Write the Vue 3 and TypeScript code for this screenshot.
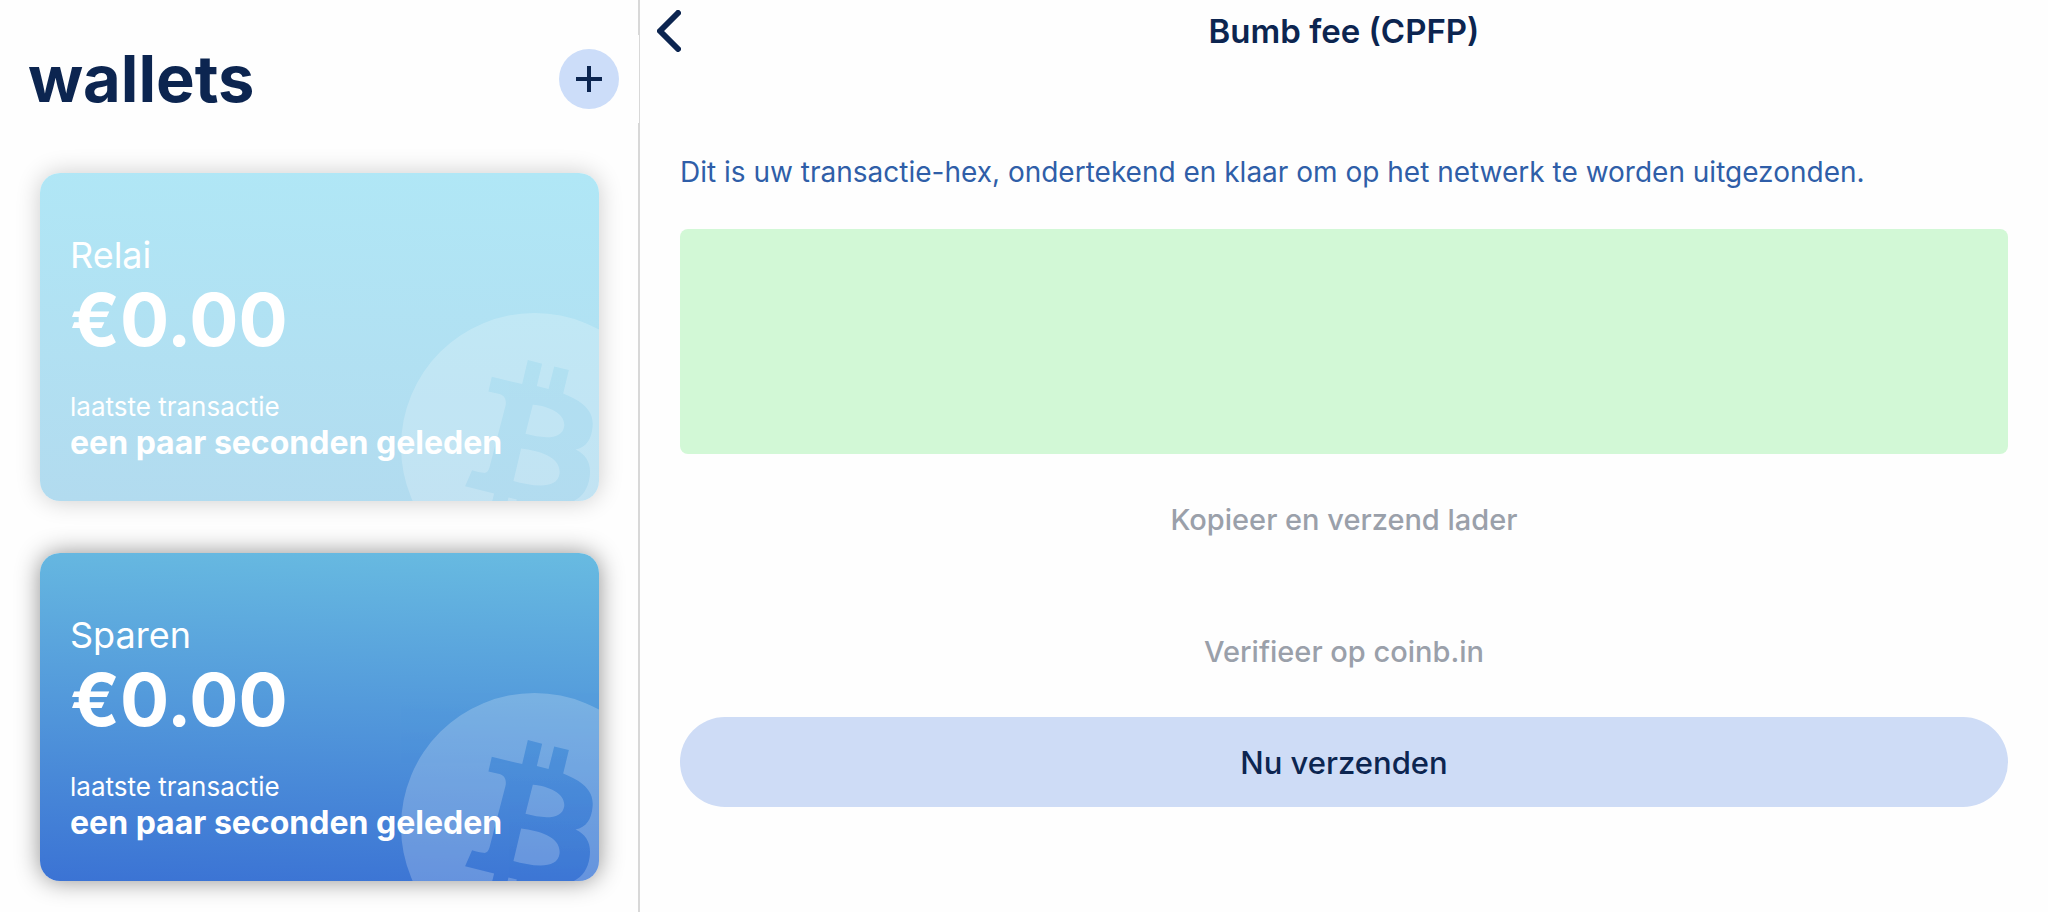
<script setup lang="ts">
import { ref } from 'vue'

interface Wallet {
  name: string
  balance: string
  lastTransaction: string
  theme: 'pale' | 'deep'
}

const wallets: Wallet[] = [
  { name: 'Relai', balance: '€0.00', lastTransaction: 'een paar seconden geleden', theme: 'pale' },
  { name: 'Sparen', balance: '€0.00', lastTransaction: 'een paar seconden geleden', theme: 'deep' },
]

const transactionHex = ref('')
</script>

<template>
  <div class="app">
    <aside class="sidebar">
      <header class="sidebar-header">
        <h1 class="sidebar-title">wallets</h1>
        <button class="add" type="button" aria-label="+">
          <svg viewBox="0 0 26 26" width="26" height="26" aria-hidden="true">
            <path d="M13 0V26M0 13H26" stroke="currentColor" stroke-width="4" fill="none" />
          </svg>
        </button>
      </header>

      <div class="cards">
        <article v-for="wallet in wallets" :key="wallet.name" class="card" :class="wallet.theme">
          <div class="card-face">
            <svg class="coin" viewBox="0 0 800 800" aria-hidden="true">
              <path
                fill="currentColor"
                fill-rule="evenodd"
                transform="translate(175 -99)"
                d="M225 99A400 400 0 1 1 225 899A400 400 0 1 1 225 99Z
                   M205 240L248 251L232 318L267 327L284 259L328 270L311 340
                   C372 364 404 394 399 440C396 478 380 502 348 508
                   C382 524 396 552 390 592C380 660 325 690 215 668L198 736L155 726L172 658
                   L147 652L130 720L87 709L104 640L17 618L38 570
                   C52 574 64 577 72 578C82 579 87 573 90 563L138 378
                   C142 358 135 347 120 342L87 334L97 290L188 312Z
                   M220 374L198 461C250 475 308 480 314 438C318 402 270 378 220 374Z
                   M185 505L162 602C215 617 295 630 300 580C305 530 240 512 185 505Z"
              />
            </svg>
            <h2 class="name">{{ wallet.name }}</h2>
            <p class="balance">{{ wallet.balance }}</p>
            <p class="label">laatste transactie</p>
            <p class="time">{{ wallet.lastTransaction }}</p>
          </div>
        </article>
      </div>
    </aside>

    <main class="detail">
      <header class="detail-header">
        <button class="back" type="button" aria-label="Terug">
          <svg viewBox="0 0 24 42" width="24" height="42" aria-hidden="true">
            <path
              d="M21 3L3 21L21 39"
              fill="none"
              stroke="currentColor"
              stroke-width="6"
              stroke-linecap="round"
              stroke-linejoin="round"
            />
          </svg>
        </button>
        <h2 class="detail-title">Bumb fee (CPFP)</h2>
      </header>

      <section class="content">
        <label class="description" for="hex">Dit is uw transactie-hex, ondertekend en klaar om op het netwerk te worden uitgezonden.</label>
        <textarea id="hex" v-model="transactionHex" class="hex" readonly></textarea>
        <button class="link copy" type="button">Kopieer en verzend lader</button>
        <button class="link verify" type="button">Verifieer op coinb.in</button>
        <button class="send" type="button">Nu verzenden</button>
      </section>
    </main>
  </div>
</template>

<style>
body {
  margin: 0;
  background: #fefefe;
}
</style>

<style scoped>
.app {
  display: grid;
  grid-template-columns: 5fr 11fr;
  min-height: 100vh;
  color: #0c2550;
  background: #fefefe;
  font-family: Inter, "Liberation Sans", sans-serif;
}

h1,
h2,
p {
  margin: 0;
}

button {
  padding: 0;
  border: 0;
  background: none;
  color: inherit;
  font: inherit;
  cursor: pointer;
}

svg {
  display: block;
}

.sidebar {
  box-sizing: border-box;
  min-width: 0;
  padding-top: 35px;
  border-right: 2px solid #d8d8d8;
}

.sidebar-header {
  display: flex;
  align-items: center;
  justify-content: space-between;
  height: 88px;
  margin-right: -1px;
  padding: 0 20px 0 28px;
  background: #fefefe;
}

.sidebar-title {
  font-size: 65px;
  font-weight: 700;
  line-height: 80px;
}

.add {
  display: grid;
  place-items: center;
  width: 60px;
  height: 60px;
  border-radius: 50%;
  background: #ccddf9;
}

.cards {
  display: flex;
  flex-direction: column;
  gap: 52px;
  padding: 50px 39px 30px 40px;
}

.card {
  border-radius: 20px;
}

.card.pale {
  background: linear-gradient(182deg, #b0e7f6, #b2dbef);
  box-shadow: 0 0 24px rgba(0, 0, 0, 0.2);
}

.card.deep {
  background: linear-gradient(182deg, #68bbe1, #3b73d4);
  box-shadow: 0 0 24px rgba(0, 0, 0, 0.44);
}

.card-face {
  position: relative;
  overflow: hidden;
  padding: 59px 30px 38px;
  border-radius: 20px;
  color: #fff;
}

.coin {
  position: absolute;
  top: 140px;
  right: -69px;
  width: 267px;
  height: 267px;
  opacity: 0.21;
}

.name,
.balance,
.label,
.time {
  position: relative;
}

.name {
  font-size: 36px;
  font-weight: 400;
  line-height: 46px;
}

.balance {
  font-size: 73px;
  font-weight: 700;
  line-height: 84px;
}

.label {
  margin-top: 29px;
  font-size: 26px;
  font-weight: 400;
  line-height: 32px;
}

.time {
  font-size: 32px;
  font-weight: 700;
  line-height: 40px;
}

.detail {
  min-width: 0;
}

.detail-header {
  display: grid;
  grid-template-columns: 60px 1fr 60px;
  align-items: center;
  height: 62px;
}

.back {
  display: grid;
  place-items: center start;
  height: 62px;
  padding-left: 17px;
}

.detail-title {
  font-size: 33px;
  font-weight: 600;
  line-height: 40px;
  text-align: center;
}

.content {
  display: flex;
  flex-direction: column;
  padding: 93px 40px 40px;
}

.description {
  color: #2f5ea8;
  font-size: 28px;
  font-weight: 400;
  line-height: 34px;
}

.hex {
  display: block;
  box-sizing: border-box;
  width: 100%;
  height: 225px;
  margin: 40px 0 0;
  padding: 20px;
  border: 0;
  border-radius: 8px;
  outline: 0;
  background: #d2f8d6;
  color: #0c2550;
  font: inherit;
  font-size: 28px;
  resize: none;
}

.link {
  align-self: center;
  height: 60px;
  color: #9aa0aa;
  font-size: 29px;
  font-weight: 500;
}

.copy {
  margin-top: 35px;
}

.verify {
  margin-top: 72px;
}

.send {
  height: 90px;
  margin-top: 36px;
  border-radius: 45px;
  background: #cedcf6;
  font-size: 31px;
  font-weight: 500;
}
</style>
